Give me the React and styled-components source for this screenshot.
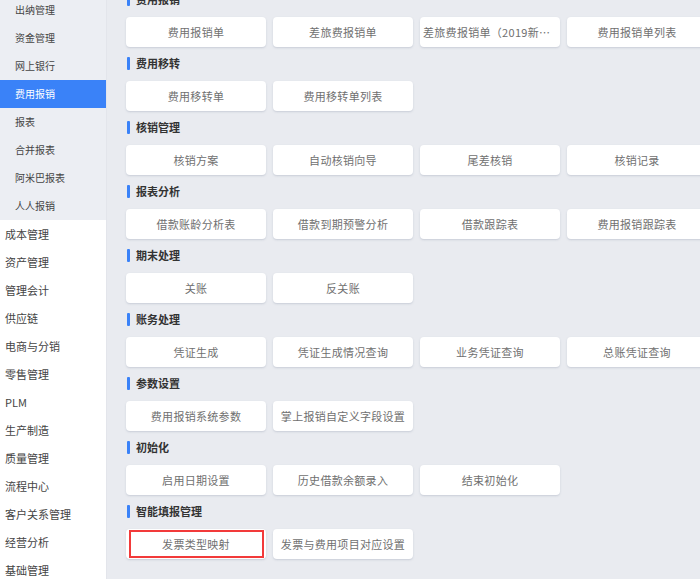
import React from "react";
import styled, { createGlobalStyle } from "styled-components";

const Global = createGlobalStyle`
  html, body { margin: 0; padding: 0; height: 100%; overflow: hidden; }
  body { font-family: "Noto Sans CJK SC", "Liberation Sans", sans-serif; background: #e9ebf0; }
  #root { height: 100%; }
`;

const Page = styled.div`
  display: flex;
  width: 700px;
  height: 579px;
  overflow: hidden;
  background: #e9ebf0;
`;

const Sidebar = styled.nav`
  width: 106px;
  flex: none;
  background: #fff;
  overflow: hidden;
`;

const SubMenu = styled.div`
  background: #eceef3;
  margin-top: -4px;
`;

const SubItem = styled.div`
  height: 28px;
  line-height: 28px;
  padding-left: 15px;
  font-size: 10px;
  color: ${(p) => (p.$active ? "#fff" : "#444")};
  background: ${(p) => (p.$active ? "#3a82f8" : "transparent")};
`;

const MenuItem = styled.div`
  height: 28px;
  line-height: 28px;
  padding-left: 5px;
  color: #444;
  font-size: 11px;
`;

const Main = styled.main`
  flex: 1;
  overflow: hidden;
  padding-left: 20px;
  border-left: 1px solid #e3e5eb;
`;

const Sections = styled.div`
  margin-top: -11px;
`;

const Section = styled.section`
  margin-bottom: 6px;
`;

const Title = styled.h3`
  margin: 0 0 8px 0;
  height: 20px;
  line-height: 20px;
  font-size: 11px;
  font-weight: bold;
  color: #333;
  display: flex;
  align-items: center;
  gap: 6px;
  &::before {
    content: "";
    width: 3px;
    height: 13px;
    background: #3a82f8;
    border-radius: 1px;
  }
`;

const Grid = styled.div`
  display: grid;
  grid-template-columns: repeat(4, 140px);
  gap: 7px;
  margin-left: -1px;
`;

const Button = styled.div`
  position: relative;
  height: 30px;
  line-height: 30px;
  background: #fff;
  border-radius: 4px;
  box-shadow: 0 1px 2px rgba(160, 168, 185, 0.45);
  color: #707070;
  font-size: 11px;
  letter-spacing: 0.3px;
  text-align: center;
  padding: 0 3px;
  white-space: nowrap;
  overflow: hidden;
  text-overflow: ellipsis;
  box-sizing: border-box;
  ${(p) =>
    p.$highlight &&
    `
    &::after {
      content: "";
      position: absolute;
      left: 3px; top: 1px; right: 2px; bottom: 1px;
      border: 2px solid #f23a3a;
    }
  `}
`;

const subItems = ["出纳管理", "资金管理", "网上银行", "费用报销", "报表", "合并报表", "阿米巴报表", "人人报销"];
const menuItems = ["成本管理", "资产管理", "管理会计", "供应链", "电商与分销", "零售管理", "PLM", "生产制造", "质量管理", "流程中心", "客户关系管理", "经营分析", "基础管理"];

const sections = [
  { title: "费用报销", items: ["费用报销单", "差旅费报销单", "差旅费报销单（2019新版）", "费用报销单列表"] },
  { title: "费用移转", items: ["费用移转单", "费用移转单列表"] },
  { title: "核销管理", items: ["核销方案", "自动核销向导", "尾差核销", "核销记录"] },
  { title: "报表分析", items: ["借款账龄分析表", "借款到期预警分析", "借款跟踪表", "费用报销跟踪表"] },
  { title: "期末处理", items: ["关账", "反关账"] },
  { title: "账务处理", items: ["凭证生成", "凭证生成情况查询", "业务凭证查询", "总账凭证查询"] },
  { title: "参数设置", items: ["费用报销系统参数", "掌上报销自定义字段设置"] },
  { title: "初始化", items: ["启用日期设置", "历史借款余额录入", "结束初始化"] },
  { title: "智能填报管理", items: ["发票类型映射", "发票与费用项目对应设置"], highlight: 0 },
];

export default function App() {
  return (
    <Page>
      <Global />
      <Sidebar>
        <SubMenu>
          {subItems.map((t) => (
            <SubItem key={t} $active={t === "费用报销"}>{t}</SubItem>
          ))}
        </SubMenu>
        {menuItems.map((t) => (
          <MenuItem key={t}>{t}</MenuItem>
        ))}
      </Sidebar>
      <Main>
        <Sections>
          {sections.map((s) => (
            <Section key={s.title}>
              <Title>{s.title}</Title>
              <Grid>
                {s.items.map((it, i) => (
                  <Button key={it} $highlight={s.highlight === i}>{it}</Button>
                ))}
              </Grid>
            </Section>
          ))}
        </Sections>
      </Main>
    </Page>
  );
}
